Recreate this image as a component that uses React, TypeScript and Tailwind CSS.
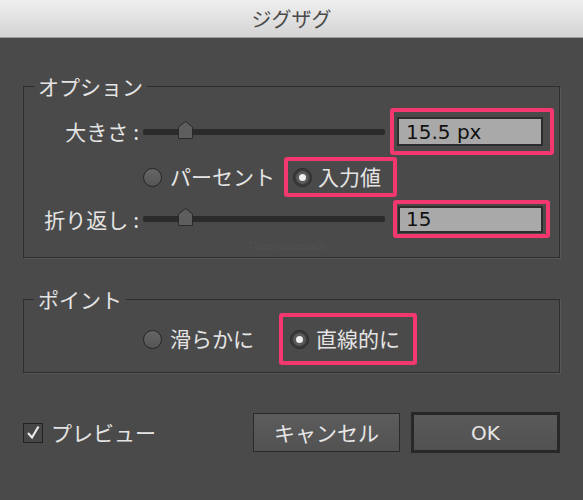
import React from "react";

function Radio({ checked }: { checked?: boolean }) {
  return checked ? (
    <span className="flex items-center justify-center w-[19px] h-[19px] rounded-full border border-[#262626] bg-[#5a5a5a] shadow-[inset_0_0_0_2px_#3a3a3a]">
      <span className="w-[7px] h-[7px] rounded-full bg-[#efefef]" />
    </span>
  ) : (
    <span className="block w-[19px] h-[19px] rounded-full border border-[#262626] bg-gradient-to-b from-[#666] to-[#555]" />
  );
}

function Slider() {
  return (
    <div className="relative flex items-center w-[242px] h-[18px]">
      <div className="w-full h-[6px] rounded-[2px] bg-[#2b2b2b]" />
      {/* thumb */}
      <svg className="absolute left-[35px] -top-[2px]" width="15" height="18" viewBox="0 0 15 18">
        <polygon
          points="7.5,0.5 14.5,6 14.5,17.5 0.5,17.5 0.5,6"
          fill="#5e5e5e"
          stroke="#2a2a2a"
          strokeWidth="1"
        />
      </svg>
    </div>
  );
}

const latin = "font-['DejaVu_Sans',sans-serif]";

export default function App() {
  return (
    <div className="w-[583px] h-[500px] overflow-hidden bg-[#4a4a4a] text-[#e4e4e4] font-['Noto_Sans_CJK_JP',sans-serif]">
      {/* Title bar */}
      <div className="h-[38px] flex items-center justify-center bg-gradient-to-b from-[#efefef] to-[#d4d4d4] border-b border-[#9c9c9c] text-[20px] text-[#4a4a4a]">
        ジグザグ
      </div>

      <div className="px-[23px] pt-[36px]">
        {/* Options */}
        <fieldset className="relative border border-[#2e2e2e] shadow-[1px_1px_0_#585858] pb-[19px]">
          <legend className="ml-[10px] px-[4px] text-[21px] leading-[24px]">
            オプション
          </legend>

          <div className="mt-[10px] h-[47px] flex items-center">
            <div className="w-[115px] text-right text-[21px] leading-none">
              大きさ<span className="ml-[5px]">:</span>
            </div>
            <div className="ml-[4px]">
              <Slider />
            </div>
            <div className="ml-[5px] w-[164px] h-[47px] flex items-center pl-[3px] border-4 border-[#f2386f] rounded-[3px]">
              <div className={`w-[146px] h-[29px] flex items-center pl-[7px] bg-[#a9a9a9] border-2 border-[#2d2d2d] text-[20px] text-[#111] ${latin}`}>
                15.5 px
              </div>
            </div>
          </div>

          <div className="mt-[2px] h-[40px] flex items-center text-[21px]">
            <div className="ml-[119px] flex items-center">
              <Radio />
              <span className="ml-[8px]">パーセント</span>
            </div>
            <div className="ml-[9px] w-[113px] h-[40px] flex items-center pl-[5px] border-4 border-[#f2386f] rounded-[3px]">
              <Radio checked />
              <span className="ml-[6px]">入力値</span>
            </div>
          </div>

          <div className="mt-[3px] h-[38px] flex items-center">
            <div className="w-[115px] text-right text-[21px] leading-none">
              折り返し<span className="ml-[5px]">:</span>
            </div>
            <div className="ml-[4px]">
              <Slider />
            </div>
            <div className="ml-[8px] w-[157px] h-[38px] flex items-center pl-[1px] border-4 border-[#f2386f] rounded-[3px]">
              <div className={`w-[145px] h-[27px] flex items-center pl-[6px] bg-[#a9a9a9] border-2 border-[#2d2d2d] text-[20px] text-[#111] ${latin}`}>
                15
              </div>
            </div>
          </div>

          <span className="absolute left-[224px] bottom-[3px] text-[11px] text-[#515151] font-['Liberation_Sans',sans-serif]">
            Tutorialmaniacs
          </span>
        </fieldset>

        {/* Points */}
        <fieldset className="mt-[29px] border border-[#2e2e2e] shadow-[1px_1px_0_#585858] pb-[7px]">
          <legend className="ml-[10px] px-[4px] text-[21px] leading-[24px]">
            ポイント
          </legend>
          <div className="mt-[2px] h-[52px] flex items-center text-[21px]">
            <div className="ml-[119px] flex items-center">
              <Radio />
              <span className="ml-[8px]">滑らかに</span>
            </div>
            <div className="ml-[25px] w-[138px] h-[52px] flex items-center pl-[7px] border-4 border-[#f2386f] rounded-[3px]">
              <Radio checked />
              <span className="ml-[7px]">直線的に</span>
            </div>
          </div>
        </fieldset>

        {/* Footer */}
        <div className="mt-[39px] h-[41px] flex items-center justify-between">
          <div className="flex items-center text-[21px]">
            <span className="flex items-center justify-center w-[20px] h-[20px] bg-[#464646] border border-[#222]">
              <svg width="16" height="16" viewBox="0 0 16 16">
                <polyline
                  points="3,8 7,12.5 13.5,1.5"
                  fill="none"
                  stroke="#e8e8e8"
                  strokeWidth="2.2"
                />
              </svg>
            </span>
            <span className="ml-[8px]">プレビュー</span>
          </div>
          <div className="flex items-center gap-[11px]">
            <button className="w-[147px] h-[39px] flex items-center justify-center bg-gradient-to-b from-[#5c5c5c] to-[#525252] border border-[#2a2a2a] text-[21px] text-[#e6e6e6]">
              キャンセル
            </button>
            <button className={`w-[149px] h-[41px] flex items-center justify-center bg-gradient-to-b from-[#5a5a5a] to-[#515151] border-[3px] border-[#282828] text-[20px] text-[#e6e6e6] ${latin}`}>
              OK
            </button>
          </div>
        </div>
      </div>
    </div>
  );
}
